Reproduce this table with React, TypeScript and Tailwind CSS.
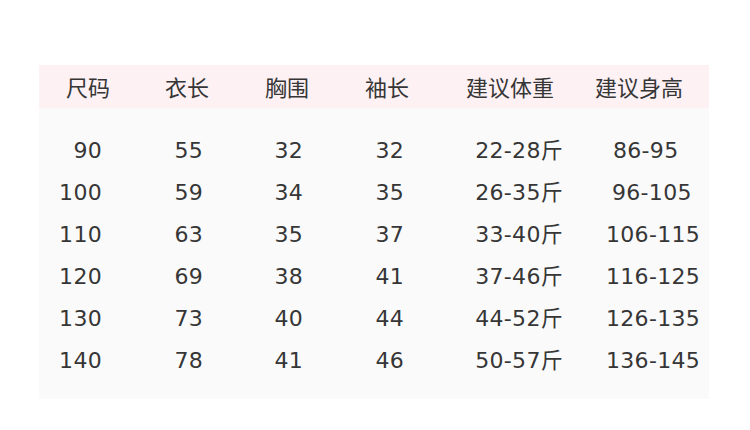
const rows = [
  ["90", "55", "32", "32", "22-28斤", "86-95"],
  ["100", "59", "34", "35", "26-35斤", "96-105"],
  ["110", "63", "35", "37", "33-40斤", "106-115"],
  ["120", "69", "38", "41", "37-46斤", "116-125"],
  ["130", "73", "40", "44", "44-52斤", "126-135"],
  ["140", "78", "41", "46", "50-57斤", "136-145"],
];

// last column is not aligned the same on every row
const lastPad = ["pl-[30px]", "pl-[29px]", "pl-[23px]", "pl-[23px]", "pl-[23px]", "pl-[23px]"];

export default function App() {
  return (
    <div
      className="w-[750px] h-[430px] bg-white pt-[65px] pl-[39px]"
      style={{ fontFamily: '"Noto Sans CJK SC", "Noto Sans", sans-serif' }}
    >
      <div className="w-[670px] h-[334px] bg-[#fafafa] text-[#363636]">

        {/* ── Header ── */}
        <div className="flex h-[43px] bg-[#fdf1f4] text-[22px] leading-[43px]">
          <div className="w-[98px] text-center">尺码</div>
          <div className="w-[100px] text-center">衣长</div>
          <div className="w-[100px] text-center">胸围</div>
          <div className="w-[100px] text-center">袖长</div>
          <div className="w-[146px] text-center">建议体重</div>
          <div className="w-[126px] pl-[12px]">建议身高</div>
        </div>

        {/* ── Rows ── */}
        <div
          className="pt-[22px] text-[22px] leading-[42px] tracking-[0.3px]"
          style={{ fontFamily: '"DejaVu Sans", "Noto Sans CJK SC", sans-serif' }}
        >
          {rows.map((r, i) => (
            <div key={r[0]} className="flex h-[42px]">
              <div className="w-[98px] text-right pr-[35px]">{r[0]}</div>
              <div className="w-[100px] text-right pr-[34px]">{r[1]}</div>
              <div className="w-[100px] text-right pr-[34px]">{r[2]}</div>
              <div className="w-[100px] text-right pr-[33px]">{r[3]}</div>
              <div className="w-[146px] text-right pr-[20px]">{r[4]}</div>
              <div className={`w-[126px] ${lastPad[i]}`}>{r[5]}</div>
            </div>
          ))}
        </div>
      </div>
    </div>
  );
}
